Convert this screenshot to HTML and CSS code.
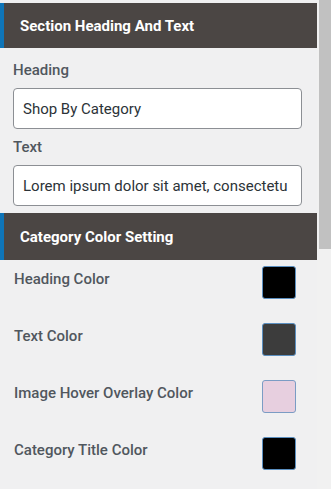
FILE: index.html
```html
<!DOCTYPE html>
<html>
<head>
<meta charset="utf-8">
<link rel="stylesheet" href="styles.css">
</head>
<body>
<div class="page">
  <div class="panel">
    <div class="section-head">Section Heading And Text</div>
    <div class="fields">
      <label class="field-label">Heading</label>
      <div class="input">Shop By Category</div>
      <label class="field-label second">Text</label>
      <div class="input">Lorem ipsum dolor sit amet, consectetu</div>
    </div>
    <div class="section-head head-two">Category Color Setting</div>
    <div class="rows">
      <div class="row"><span class="row-label">Heading Color</span><span class="swatch sw-black"></span></div>
      <div class="row"><span class="row-label">Text Color</span><span class="swatch sw-dark"></span></div>
      <div class="row"><span class="row-label">Image Hover Overlay Color</span><span class="swatch sw-pink"></span></div>
      <div class="row"><span class="row-label">Category Title Color</span><span class="swatch sw-black"></span></div>
    </div>
  </div>
  <div class="scrollbar"><div class="thumb"></div></div>
</div>
</body>
</html>
```
FILE: styles.css
```css
html, body {
  margin: 0;
  padding: 0;
  background: #f0f0f1;
  font-family: Roboto, "Liberation Sans", sans-serif;
}
.page {
  display: flex;
  width: 331px;
  height: 489px;
  overflow: hidden;
}
.panel {
  width: 317px;
  flex: none;
  padding-top: 3px;
}
.section-head {
  height: 45px;
  box-sizing: border-box;
  border-left: 4px solid #0f75b8;
  background: #4b4644;
  color: #ffffff;
  font-weight: 700;
  font-size: 15px;
  padding-left: 16px;
  display: flex;
  align-items: center;
}
.head-two {
  height: 47px;
  margin-top: 7px;
}
.fields {
  padding: 12px 15px 0 13px;
}
.field-label {
  display: block;
  height: 20px;
  line-height: 20px;
  font-size: 15px;
  font-weight: 500;
  color: #50575e;
  margin-bottom: 8px;
}
.field-label.second {
  margin-top: 8px;
}
.input {
  height: 41px;
  box-sizing: border-box;
  border: 1px solid #8c8f94;
  border-radius: 4px;
  background: #ffffff;
  color: #2c3338;
  font-size: 15px;
  padding: 0 9px;
  display: flex;
  align-items: center;
  white-space: nowrap;
  overflow: hidden;
}
.rows {
  padding: 0 21px 0 14px;
}
.row {
  height: 57px;
  display: flex;
  justify-content: space-between;
  align-items: flex-start;
}
.row-label {
  margin-top: 9px;
  line-height: 20px;
  font-size: 15px;
  font-weight: 500;
  color: #50575e;
}
.swatch {
  margin-top: 6px;
  width: 34px;
  height: 33px;
  box-sizing: border-box;
  border: 1px solid #5b8fc0;
  border-radius: 3px;
}
.sw-black { background: #000000; }
.sw-dark { background: #3c3c3c; }
.sw-pink { background: #e7cfdf; border-color: #7b9cc4; }
.scrollbar {
  width: 14px;
  flex: none;
  padding-left: 2px;
  box-sizing: border-box;
  background: #f1f1f1;
}
.thumb {
  height: 249px;
  background: #c1c1c1;
}
```
